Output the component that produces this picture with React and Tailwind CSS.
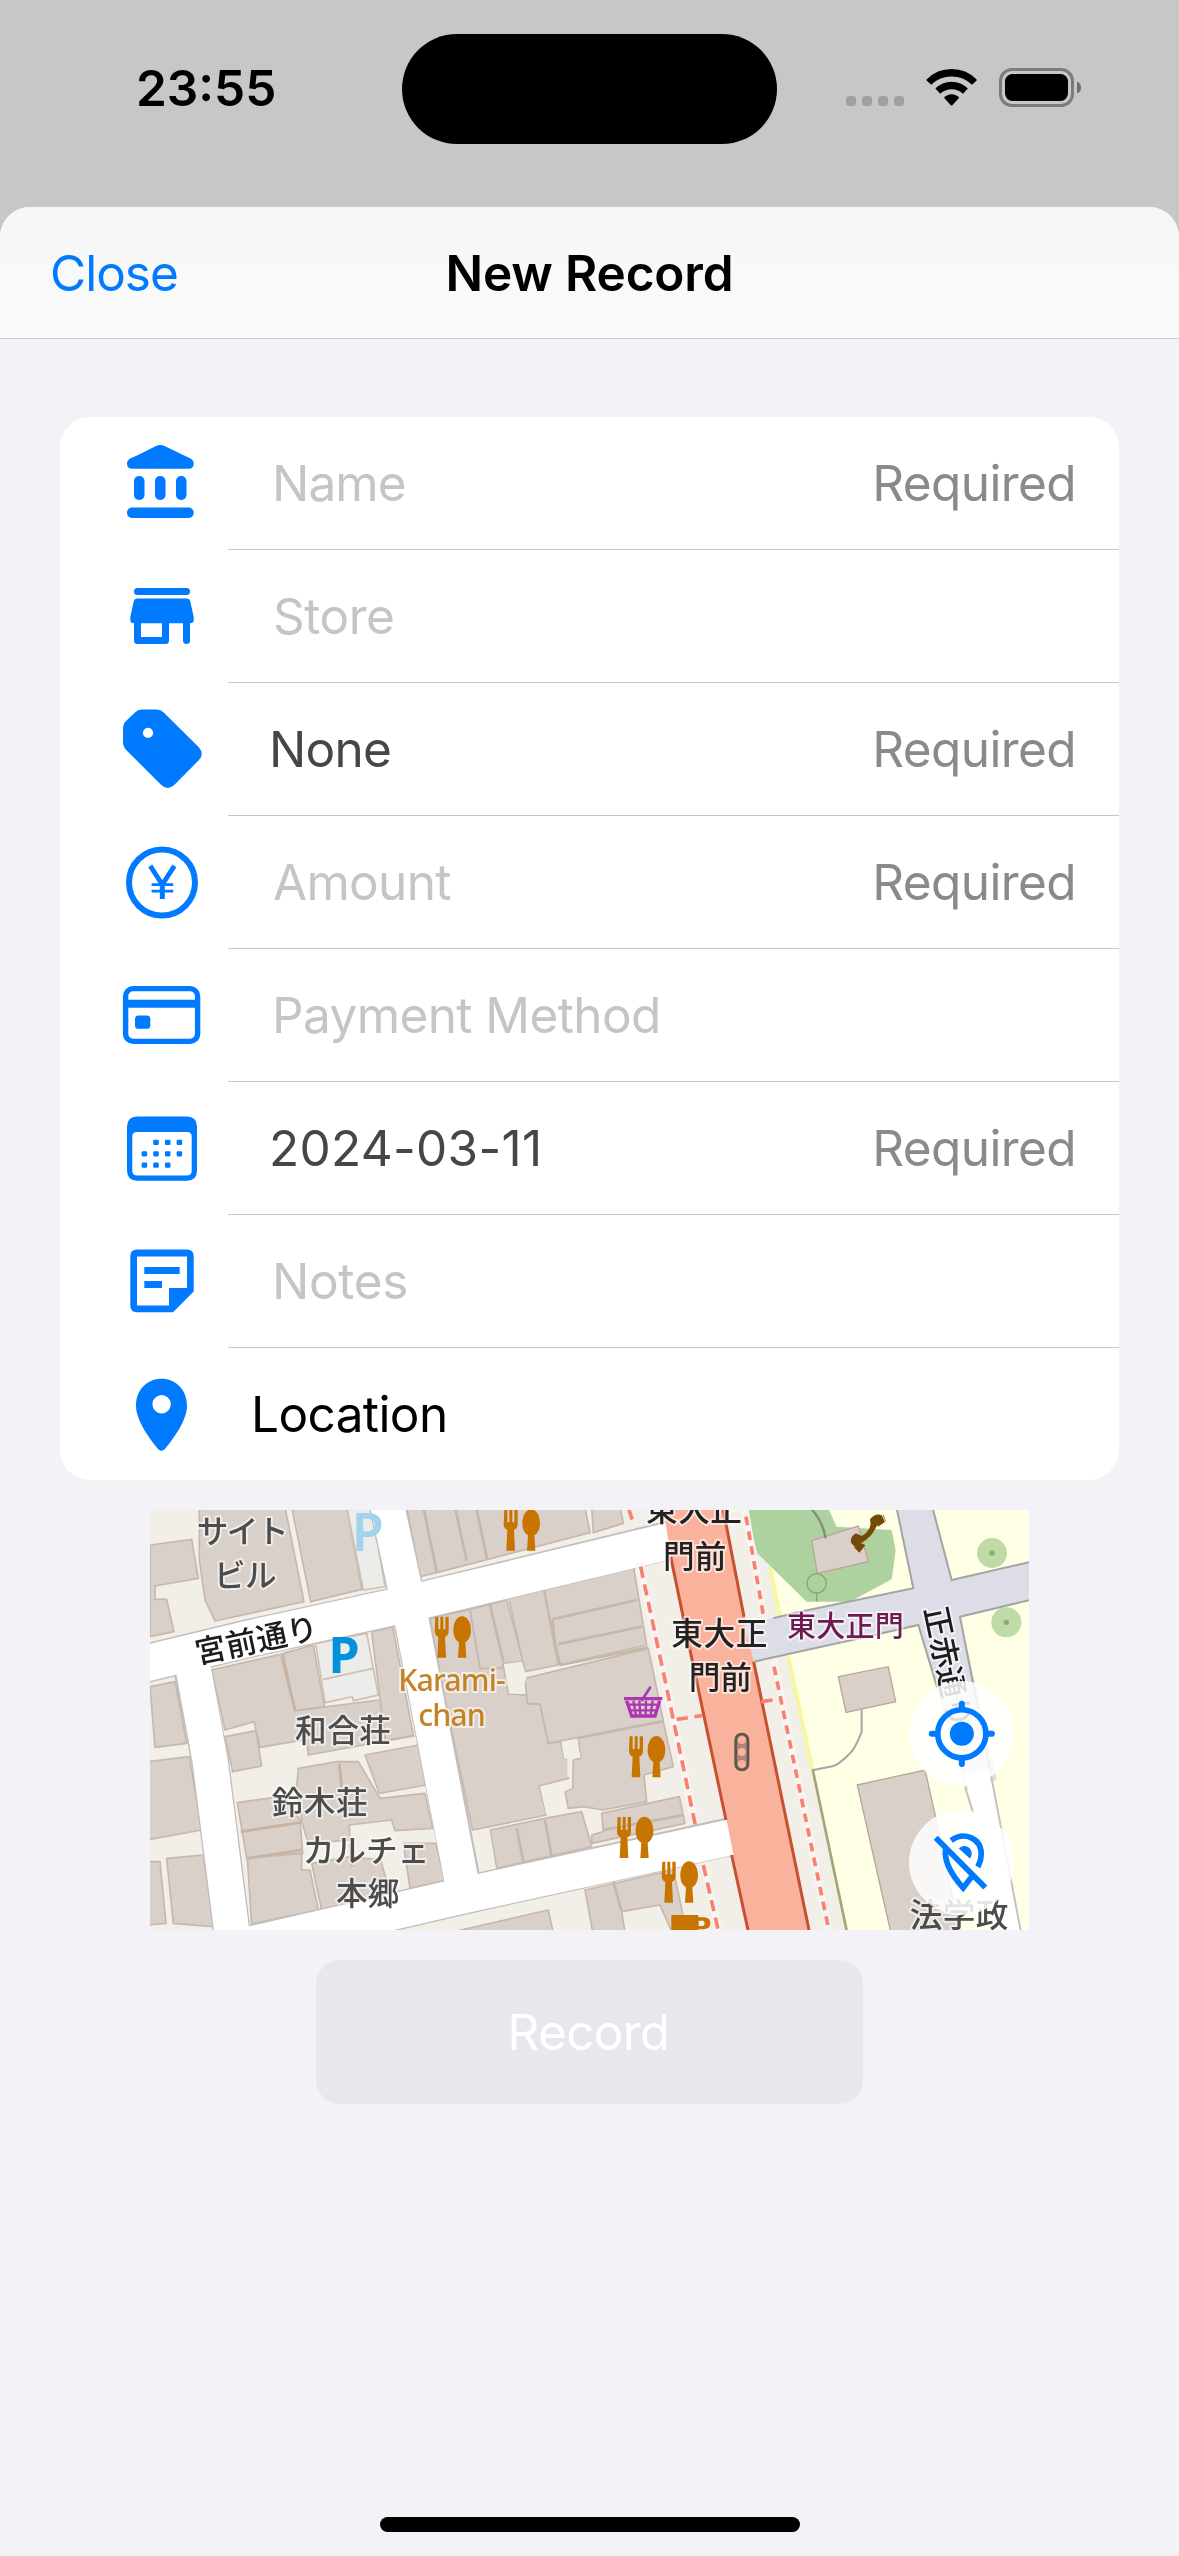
import React from "react";

const JP = '"Noto Sans CJK JP", sans-serif';

/* ---------- form icons (90 x 90 grid) ---------- */

function Icon({ children }) {
  return (
    <svg viewBox="0 0 90 90" className="h-[90px] w-[90px] text-[#007aff]" fill="currentColor">
      {children}
    </svg>
  );
}

const BankIcon = () => (
  <Icon>
    <path d="M38.5 8.2Q43.3 5.8 48 8.2L73.5 20.4Q76.7 22.2 76.7 25.5Q76.7 30.8 71.5 30.8H15.2Q10 30.8 10 25.5Q10 22.2 13.2 20.4L21 17Z" />
    <rect x="17" y="38" width="10.5" height="24" rx="5" />
    <rect x="38" y="38" width="10.5" height="24" rx="5" />
    <rect x="59" y="38" width="10.5" height="24" rx="5" />
    <rect x="10" y="69.5" width="66.7" height="10.5" rx="5" />
  </Icon>
);

const StoreIcon = () => (
  <Icon>
    <rect x="17" y="17" width="56" height="7" rx="3.5" />
    <path
      fillRule="evenodd"
      d="M20 27.5H70Q72.6 27.5 73.2 30L76.7 46V49Q76.7 52.2 73 52.2V70Q73 73 69.5 73Q66 73 66 69.5V52.2H52V69.5Q52 73 48.5 73H20.5Q17 73 17 69.5V52.2Q13.3 52.2 13.3 49V46L16.8 30Q17.4 27.5 20 27.5ZM24 52.2V66H45V52.2Z"
    />
  </Icon>
);

const TagIcon = () => (
  <Icon>
    <path
      fillRule="evenodd"
      d="M24.5 5.6H39.5Q43.8 5.6 47 8.7L82 43.5Q87.5 50 82 56L57.5 80.7Q50.6 87.2 44 80.7L9.2 46Q6 42.6 6 38V23.5Q6 20 8.5 17.5L18 8.4Q20.8 5.6 24.5 5.6ZM31 23.8a5.1 5.1 0 1 0 0.01 10.2a5.1 5.1 0 1 0 -0.01 -10.2Z"
    />
  </Icon>
);

const YenIcon = () => (
  <Icon>
    <circle cx="45" cy="45.5" r="33" fill="none" stroke="currentColor" strokeWidth="6" />
    <path d="M33.2 28.9L45.3 47.5L57.4 28.9" fill="none" stroke="currentColor" strokeWidth="4.8" />
    <path d="M45.3 46.5V62" fill="none" stroke="currentColor" strokeWidth="5" />
    <path d="M34.6 47.6H56.2M34.6 54.2H56.2" fill="none" stroke="currentColor" strokeWidth="2.8" />
  </Icon>
);

const CardIcon = () => (
  <Icon>
    <rect x="8.6" y="18.6" width="72" height="52.8" rx="7.5" fill="none" stroke="currentColor" strokeWidth="5.4" />
    <path d="M8 29.8H81V37.8H8Z" />
    <rect x="18" y="45.6" width="15.3" height="13.2" rx="3.4" />
  </Icon>
);

const CAL_DOTS = [
  [39, 39.4], [50.7, 39.4], [62.4, 39.4],
  [27.4, 50.8], [39, 50.8], [50.7, 50.8], [62.4, 50.8],
  [27.4, 62.2], [39, 62.2], [50.7, 62.2],
];

const CalendarIcon = () => (
  <Icon>
    <path
      fillRule="evenodd"
      d="M20 13.5H70Q80 13.5 80 24V67.3Q80 77.7 70 77.7H20Q10 77.7 10 67.3V24Q10 13.5 20 13.5ZM20 29Q15.3 29 15.3 33.5V67.5Q15.3 72.6 20.3 72.6H69.7Q74.7 72.6 74.7 67.5V33.5Q74.7 29 70 29Z"
    />
    {CAL_DOTS.map(([x, y]) => (
      <rect key={`${x}-${y}`} x={x - 2.8} y={y - 2.6} width="5.6" height="5.2" rx="1.3" />
    ))}
  </Icon>
);

const NotesIcon = () => (
  <Icon>
    <path
      fillRule="evenodd"
      d="M20 13.4H70Q76.7 13.4 76.7 20V55.5L56 76.2H20Q13.3 76.2 13.3 69.5V20Q13.3 13.4 20 13.4ZM20 20.4V69.4H52V51.9H70V20.4Z"
    />
    <path d="M27.3 31H62.7V37.9H27.3ZM27.3 45H45V51.9H27.3Z" />
  </Icon>
);

const PinIcon = () => (
  <Icon>
    <path
      fillRule="evenodd"
      d="M44.5 9.8C58.5 9.8 70 20.5 70 37C70 52 55 71.5 48 80Q44.5 83.6 41 80C34 71.5 19 52 19 37C19 20.5 30.5 9.8 44.5 9.8ZM44.6 26a9.2 9.2 0 1 0 .01 18.4a9.2 9.2 0 1 0 -.01 -18.4Z"
    />
  </Icon>
);

/* ---------- form rows ---------- */

const ROWS = [
  { icon: BankIcon, text: "Name", style: "pl-[44px] text-[#c5c5c7] tracking-[-0.9px]", required: true },
  { icon: StoreIcon, text: "Store", style: "pl-[45px] text-[#c5c5c7] tracking-[-0.5px]" },
  { icon: TagIcon, text: "None", style: "pl-[41px] text-[#464646] tracking-[-0.7px]", required: true },
  { icon: YenIcon, text: "Amount", style: "pl-[45px] text-[#c5c5c7] tracking-[-0.7px]", required: true },
  { icon: CardIcon, text: "Payment Method", style: "pl-[44px] text-[#c5c5c7] tracking-[-0.6px]" },
  { icon: CalendarIcon, text: "2024-03-11", style: "pl-[41px] text-[#464646] tracking-[0.3px]", required: true },
  { icon: NotesIcon, text: "Notes", style: "pl-[44px] text-[#c5c5c7] tracking-[-0.3px]" },
  { icon: PinIcon, text: "Location", style: "pl-[23px] text-black tracking-[-0.6px]" },
];

function Row({ row, last }) {
  const RowIcon = row.icon;
  return (
    <div className={last ? "flex h-[132px] items-stretch" : "flex h-[133px] items-stretch"}>
      <div className="flex h-[132px] w-[168px] shrink-0 items-center pl-[57px]">
        <RowIcon />
      </div>
      <div
        className={
          last
            ? "flex flex-1 items-center justify-between pt-[2px] pr-[43px]"
            : "flex flex-1 items-center justify-between border-b border-[#c6c6c8] pt-[2px] pr-[43px]"
        }
      >
        <span className={row.style}>{row.text}</span>
        {row.required && <span className="tracking-[-0.6px] text-[#8a8a8e]">Required</span>}
      </div>
    </div>
  );
}

/* ---------- map ---------- */

function Restaurant({ x, y }) {
  return (
    <g transform={`translate(${x} ${y})`} fill="#c77400">
      <path d="M-54 -61h9v38h6v-38h9v38h6v-38h10v44q0 12 -11 17l3 62h-26l3 -62q-11 -5 -11 -17Z" />
      <path d="M26 -62c15 0 27 18 27 42c0 19 -8 31 -17 36l3 46h-25l3 -46c-9 -5 -17 -17 -17 -36c0 -24 12 -42 26 -42Z" />
    </g>
  );
}

function Label({ x, y, size = 95, w, children, fill = "#4c4c4c", rotate = 0, weight = 500 }) {
  return (
    <text
      x={x}
      y={y}
      fontSize={size}
      fontWeight={weight}
      fill={fill}
      textAnchor="middle"
      textLength={w}
      fontFamily={JP}
      stroke="#ffffff"
      strokeOpacity="0.6"
      strokeWidth="12"
      strokeLinejoin="round"
      paintOrder="stroke"
      transform={rotate ? `rotate(${rotate} ${x} ${y})` : undefined}
    >
      {children}
    </text>
  );
}

function StreetMap() {
  return (
    <svg viewBox="0 0 2637 1260" className="block h-full w-full blur-[0.6px]">
      <rect width="2637" height="1260" fill="#f2efe9" />

      {/* buildings west of the side street */}
      <g fill="#d9d0c9" stroke="#c6b8ad" strokeWidth="5" strokeLinejoin="round">
        <path d="M0 105L125 88L145 205L15 228V268H50L72 365L0 380Z" />
        <path d="M148 -9H405L462 275L195 333L165 270L148 150Z" />
        <path d="M425 -9H590L636 238L482 275Z" />
        <path d="M185 480L395 432L435 602L690 570L792 678L475 735L470 688L330 712L312 635L225 660Z" />
        <path d="M400 430L490 405L523 590L435 602Z" />
        <path d="M665 365L728 350L790 676L706 692Z" />
        <path d="M225 680L318 662L335 768L248 785Z" />
        <path d="M645 735L805 705L828 825L688 850Z" />
        <path d="M445 775L562 755L625 755L690 865L825 850L848 955L735 962L725 930L598 945L600 990L475 1000L455 935L440 830Z" />
        <path d="M262 878L400 858L450 930L458 1030L290 1045Z" />
        <path d="M292 1045L455 1030L455 1080H480L505 1200L305 1242Z" />
        <path d="M485 1060L600 1040L692 1050L720 1150L515 1200Z" />
        <path d="M760 1000L857 1000L885 1112L780 1135Z" />
        <path d="M0 530L75 515L110 700L15 712Z" />
        <path d="M-9 755L118 740L155 960L-9 990Z" />
        <path d="M-9 1055H30L48 1240L-9 1245Z" />
        <path d="M50 1045L160 1035L192 1250L70 1240Z" />
      </g>
      <g stroke="#c6b3a4" strokeWidth="8" fill="none">
        <path d="M395 440L435 600M272 965L450 938M290 1045L455 1020M568 760L575 835M600 1000L605 1070" />
      </g>

      {/* car parks */}
      <g fill="#ececea" stroke="#cfc0b6" strokeWidth="5">
        <path d="M590 -9H665L705 230L640 240Z" />
        <path d="M497 400L650 370L685 555L610 572L607 560L525 578Z" />
        <path d="M520 508L670 475" />
      </g>

      {/* buildings between the side street and the avenue */}
      <g transform="translate(720 0)" fill="#d9d0c9" stroke="#c6b8ad" strokeWidth="5" strokeLinejoin="round">
        <path d="M50 -9H585L600 68L140 188L90 200Z" />
        <path d="M605 -9H690L700 40L610 68Z" />
        <path d="M120 325L240 298L270 475L340 465L355 552L408 555L415 582L450 582L475 700L512 695L522 745L535 750V805L447 828L470 915L248 960L160 545Z" />
        <path d="M240 298L350 270L400 455L340 460L335 475L270 475Z" />
        <path d="M355 258L460 235L505 465L405 485Z" />
        <path d="M462 232L730 168L770 405L505 465Z" />
        <path d="M405 505L775 415L820 632L475 700L450 582L412 580Z" />
        <path d="M565 685L820 635L850 770L762 795L770 875L640 900L580 890L535 895L525 845L548 835L550 748L572 745Z" />
        <path d="M300 960L465 925L575 905L605 1010L320 1075Z" />
        <path d="M635 910L868 860L885 940L605 1000V975L640 965Z" />
        <path d="M585 1140L850 1080L890 1265H845L810 1185L695 1205L705 1265H608Z" />
        <path d="M170 1270L475 1200L490 1270Z" />
      </g>
      <g transform="translate(720 0)" stroke="#c6b8a9" strokeWidth="8" fill="none">
        <path d="M100 -9L140 185M195 -9L230 152M258 -9L292 150M300 285L340 455M487 328L740 270M505 402L755 350M510 465L775 412M380 955L400 1055M465 930L485 1040M670 1115L695 1205M640 960L880 915" />
        <path d="M487 328L495 400L510 465" />
      </g>
      <g transform="translate(720 0)" fill="#f2efe9">
        <path d="M515 695L560 687L572 742L540 750L542 800H532V748L522 745Z" />
        <path d="M450 830L545 808V835L522 845L530 905L470 917Z" />
        <path d="M342 462L395 455L410 500L395 550H358Z" />
        <path d="M255 965L298 955L318 1078L270 1090Z" />
      </g>

      {/* side streets */}
      <g strokeLinecap="butt" fill="none">
        <g stroke="#c3bdbb">
          <path d="M-20 462L300 385L768 283L1560 90" strokeWidth="117" />
          <path d="M125 470L180 750L246 1270" strokeWidth="113" />
          <path d="M710 -20L775 280L935 1100" strokeWidth="110" />
          <path d="M230 1320L960 1152L1740 980" strokeWidth="116" />
        </g>
        <g stroke="#ffffff">
          <path d="M-20 462L300 385L768 283L1570 90" strokeWidth="109" />
          <path d="M125 450L180 750L246 1270" strokeWidth="105" />
          <path d="M710 -20L775 280L938 1130" strokeWidth="102" />
          <path d="M230 1320L960 1152L1760 978" strokeWidth="108" />
        </g>
      </g>

      {/* campus grounds */}
      <path d="M2045 -9H2640V1270H2090L1990 780L1920 440L1860 170L1800 90Z" fill="#ffffe5" />
      <path d="M1860 170L1890 320M1915 440L1987 778" stroke="#f8f6a0" strokeWidth="12" fill="none" />
      <path d="M1988 778L2090 1262" stroke="#a4a676" strokeWidth="8" fill="none" />
      <path d="M1785 -9L1822 130L1970 275H2100L2225 208L2237 120L2225 60L2060 50L2033 -9Z" fill="#aed1a0" />
      <path d="M1985 92L2125 48L2155 155L2002 190Z" fill="#d9d0c9" stroke="#b9a69b" strokeWidth="4" />
      <g stroke="#83a578" strokeWidth="4" fill="none">
        <circle cx="2000" cy="220" r="29" />
        <path d="M2000 249V275" />
      </g>
      <path d="M1978 -9Q2018 30 2027 85" stroke="#7e8f78" strokeWidth="7" fill="none" />

      {/* avenue */}
      <path d="M1540 -9L1720 -9L1810 450L1980 1270H1796L1730 930L1620 420L1565 160Z" fill="#f9b29c" />
      <g stroke="#c94f30" strokeWidth="9" fill="none">
        <path d="M1562 140L1620 420L1728 930M1745 1035L1795 1265M1720 0L1782 320M1811 455L1978 1265" />
      </g>

      {/* pavements */}
      <g fill="none" stroke="#f8f4f2" strokeWidth="22">
        <path d="M1468 160L1545 510L1635 940M1660 1060L1705 1260M1785 0L1840 315M1872 450L2035 1260" />
      </g>
      <g fill="none" stroke="#fa8072" strokeWidth="11" strokeDasharray="34 20">
        <path d="M1436 -4L1450 40M1472 170L1545 510L1636 945M1660 1065L1705 1262" />
        <path d="M1580 628L1656 617M1834 575L1880 568" />
      </g>
      <path d="M1788 20L1840 315M1872 470L2037 1262" fill="none" stroke="#fa8072" strokeWidth="11" strokeDasharray="26 19" />

      {/* campus roads */}
      <g fill="#dddde8">
        <path d="M1782 342L1950 305L2290 235L2240 -9H2348L2405 210L2640 156V270L2430 320L2540 810L2450 840L2305 345L2130 385L1812 455Z" />
        <path d="M2445 790L2515 780L2620 1265H2530Z" fill="#ffffff" />
      </g>
      <g stroke="#a5a3a3" strokeWidth="6" fill="none">
        <path d="M1870 325L1950 305L2290 235L2240 -5M2348 -5L2405 210L2640 156M2640 270L2430 320L2520 780M1812 455L2130 385L2305 345L2370 560" />
        <path d="M2520 780L2612 1262M2445 830L2470 910" stroke="#c5c3bd" />
        <path d="M2135 600V665Q2115 720 2095 735Q2060 770 2040 770L1990 780" />
      </g>
      <g fill="#d9d0c9" stroke="#b9a69b" strokeWidth="4">
        <path d="M2065 500L2215 470L2237 575L2088 607Z" />
        <path d="M2122 825L2325 780L2350 890L2430 1265H2222Z" />
      </g>
      <g fill="#bedba5">
        <circle cx="2526" cy="129" r="45" />
        <circle cx="2569" cy="337" r="45" />
      </g>
      <g fill="#8aa87b">
        <circle cx="2526" cy="129" r="8" />
        <circle cx="2569" cy="337" r="8" />
      </g>

      {/* points of interest */}
      <Restaurant x={1117} y={60} />
      <Restaurant x={910} y={381} />
      <Restaurant x={1493} y={740} />
      <Restaurant x={1457} y={982} />
      <Restaurant x={1591} y={1116} />
      <path fill="#c77400" fillRule="evenodd" d="M1564 1215H1645V1222H1662Q1681 1222 1681 1240Q1681 1256 1662 1258H1645V1265H1564ZM1646 1232V1248H1660Q1668 1240 1660 1232Z" />
      <g stroke="#ad36b1" fill="none">
        <path d="M1476 570L1500 533" strokeWidth="8" strokeLinecap="round" />
        <path d="M1422 566H1537" strokeWidth="10" />
        <path d="M1430 572L1445 618H1515L1529 572" strokeWidth="10" />
        <path d="M1434 584H1525M1440 601H1520M1450 572L1458 616M1468 572L1471 616M1488 572L1487 616M1508 572L1502 616" strokeWidth="7" />
      </g>
      <g stroke="#5c5650" strokeWidth="8" fill="none">
        <rect x="1757" y="672" width="37" height="108" rx="18" fill="#7a655c" fillOpacity="0.6" />
        <g fill="#f9b29c" stroke="none">
          <circle cx="1775.5" cy="690" r="12" />
          <circle cx="1775.5" cy="726" r="12" />
          <circle cx="1775.5" cy="762" r="12" />
        </g>
      </g>
      <g fill="#734a08">
        <path d="M2104 100Q2098 82 2118 70L2135 78Q2158 66 2162 42L2160 28Q2178 6 2198 18Q2190 40 2178 52Q2165 82 2135 98Q2124 104 2122 118Z" />
        <path d="M2112 112L2128 128L2146 106L2130 98ZM2184 50L2208 34L2200 14L2186 22Z" />
        <path d="M2196 14L2208 40" stroke="#f4efdf" strokeWidth="3" />
      </g>

      {/* labels */}
      <Label x={278} y={98} w={276}>サイト</Label>
      <Label x={286} y={231} w={188}>ビル</Label>
      <Label x={326} y={423} w={374} size={93} rotate={-12} fill="#1c1c1c">宮前通り</Label>
      <Label x={579} y={697} w={288}>和合荘</Label>
      <Label x={509} y={913} w={288}>鈴木荘</Label>
      <Label x={648} y={1056} w={380}>カルチェ</Label>
      <Label x={653} y={1184} w={190}>本郷</Label>
      <Label x={1632} y={34} w={288} fill="#222222">東大正</Label>
      <Label x={1634} y={175} w={190} fill="#222222">門前</Label>
      <Label x={1708} y={405} w={288} fill="#222222">東大正</Label>
      <Label x={1711} y={536} w={190} fill="#222222">門前</Label>
      <Label x={2086} y={380} w={350} size={87} fill="#6f1a50">東大正門</Label>
      <Label x={2361} y={478} w={370} size={93} rotate={78} fill="#1c1c1c">正赤通り</Label>
      <Label x={2427} y={1252} w={296} size={98}>法学政</Label>
      <g fontFamily='"Noto Sans", sans-serif' textAnchor="middle">
        <text x="653" y="122" fontSize="156" fontWeight="600" fill="#a2d3ec">P</text>
        <text x="582" y="488" fontSize="150" fontWeight="700" fill="#0092da">P</text>
        <g fontSize="91" fontWeight="500" fill="#c58324" stroke="#ffffff" strokeOpacity="0.6" strokeWidth="12" paintOrder="stroke">
          <text x="906" y="543" textLength="322">Karami-</text>
          <text x="906" y="648" textLength="202">chan</text>
        </g>
      </g>
    </svg>
  );
}

function MapButton({ label, children }) {
  return (
    <button aria-label={label} className="h-[105px] w-[105px] rounded-full bg-white/85 text-[#007aff]">
      <svg viewBox="0 0 314 314" className="h-full w-full">
        {children}
      </svg>
    </button>
  );
}

function MapCard() {
  return (
    <div className="relative mt-[30px] ml-[150px] h-[420px] w-[879px] overflow-hidden bg-[#f2efe9]">
      <StreetMap />
      <div className="absolute top-[171px] right-[15px] flex flex-col gap-6">
        <MapButton label="My location">
          <g fill="none" stroke="currentColor">
            <circle cx="158" cy="158" r="72" strokeWidth="17" />
            <path d="M158 68V84M158 232V248M68 158H84M232 158H248" strokeWidth="18" strokeLinecap="round" />
          </g>
          <circle cx="158" cy="158" r="36" fill="currentColor" />
        </MapButton>
        <MapButton label="Clear location">
          <g transform="translate(-327 -901)">
            <g fill="none" stroke="currentColor" strokeWidth="17">
              <path d="M407 984L555 1133" />
              <path d="M453 992C490 965 543 982 543 1034C543 1047 540 1058 533 1071" />
              <path d="M436 1020C432 1060 462 1104 489 1134L515 1100" />
            </g>
            <path d="M476 1016A20 20 0 0 1 509 1046Z" fill="currentColor" />
          </g>
        </MapButton>
      </div>
    </div>
  );
}

/* ---------- chrome ---------- */

function StatusBar() {
  return (
    <div className="flex h-[207px] items-start bg-[#c7c7c7]">
      <div className="flex h-[178px] w-[402px] items-center pl-[136px]">
        <span className="font-semibold text-black">23:55</span>
      </div>
      <div className="mt-[34px] h-[110px] w-[375px] rounded-full bg-black" />
      <div className="flex h-[176px] items-center pl-[69px]">
        <svg viewBox="0 0 236 40" className="h-[40px] w-[236px]">
          <g fill="#9f9f9f">
            <rect x="0" y="28" width="10" height="10" rx="3.5" />
            <rect x="16" y="28" width="10" height="10" rx="3.5" />
            <rect x="32" y="28" width="10" height="10" rx="3.5" />
            <rect x="48" y="28" width="10" height="10" rx="3.5" />
          </g>
          <g>
            <path d="M80.6 11.4Q91 1 105.6 1Q120.2 1 130.6 11.4Q131 12 130.6 12.6L126 16.8Q117.5 8.6 105.6 8.6Q93.7 8.6 85.2 16.8L80.6 12.6Q80.2 12 80.6 11.4Z" />
            <path d="M89.4 20.6Q96 13.7 105.6 13.7Q115.2 13.7 121.8 20.6L117 25.8Q112.3 21.2 105.6 21.2Q98.9 21.2 94.2 25.8Z" />
            <path d="M98 29.8Q101 26.3 105.6 26.3Q110.2 26.3 113.2 29.8L106.4 37.2Q105.6 38 104.8 37.2Z" />
          </g>
          <rect x="154.5" y="1.5" width="72" height="36" rx="11.5" fill="none" stroke="#7b7b7b" strokeWidth="3" />
          <rect x="159" y="6" width="63" height="27" rx="7.5" />
          <path d="M231 13.5Q235 15 235 19.5Q235 24 231 25.5Z" fill="#6f6f6f" />
        </svg>
      </div>
    </div>
  );
}

export default function App() {
  return (
    <div className="flex h-[2556px] w-[1179px] flex-col overflow-hidden bg-[#c7c7c7] font-[Inter,sans-serif] text-[49.5px] leading-none">
      <StatusBar />
      <main className="flex flex-1 flex-col overflow-hidden rounded-t-[30px] bg-[#f2f2f7]">
        <header className="grid h-[132px] grid-cols-3 items-center border-b border-[#cbcbcd] bg-linear-to-b from-[#f6f6f6] to-[#f9f9f9] to-60% pt-[2px]">
          <span className="pl-[50px] tracking-[-1px] text-[#007aff]">Close</span>
          <h1 className="text-center font-semibold tracking-[-0.15px] whitespace-nowrap text-black">New Record</h1>
        </header>

        <section className="mx-[60px] mt-[78px] flex flex-col rounded-[30px] bg-white">
          {ROWS.map((row, i) => (
            <Row key={row.text} row={row} last={i === ROWS.length - 1} />
          ))}
        </section>

        <MapCard />

        <button className="mt-[30px] ml-[316px] flex h-[144px] w-[547px] items-center justify-center rounded-[24px] bg-[#e8e7ed] pt-[2px] pr-[2px] tracking-[-0.7px] text-white">
          Record
        </button>

        <div className="mt-auto mb-6 h-[15px] w-[420px] self-center rounded-full bg-black" />
      </main>
    </div>
  );
}
